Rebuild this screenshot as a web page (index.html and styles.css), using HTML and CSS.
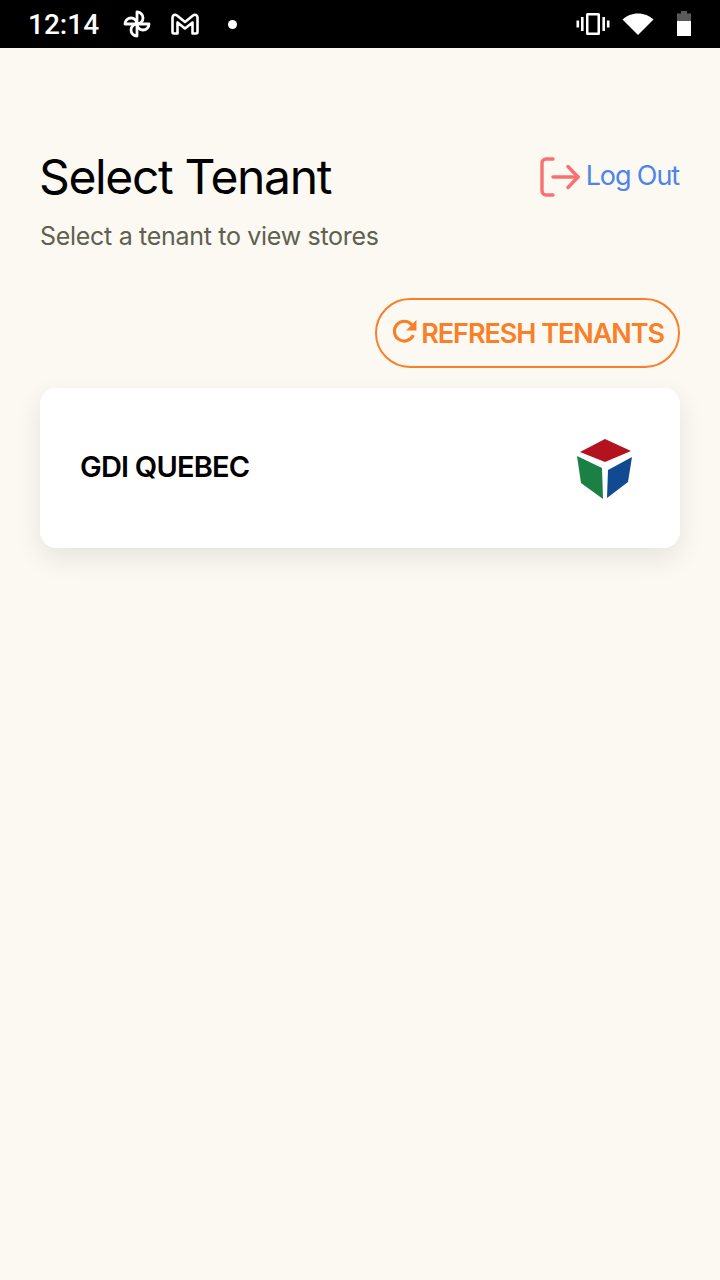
FILE: index.html
```html
<!DOCTYPE html>
<html lang="en">

<head>
    <meta charset="UTF-8">
    <meta name="viewport" content="width=device-width, initial-scale=1.0">
    <title>Select Tenant</title>
    <link rel="stylesheet" href="styles.css">
</head>

<body>
    <div class="status-bar">
        <div class="status-left">
            <span class="clock">12:14</span>
            <!-- pinwheel -->
            <svg class="fan" width="30" height="30" viewBox="0 0 30 30" fill="none" stroke="#fff" stroke-width="2.800" stroke-linejoin="round">
                <path d="M15 15V3A6 6 0 0 1 15 15Z"/>
                <path d="M15 15H27A6 6 0 0 1 15 15Z"/>
                <path d="M15 15V27A6 6 0 0 1 15 15Z"/>
                <path d="M15 15H3A6 6 0 0 1 15 15Z"/>
            </svg>
            <!-- gmail -->
            <svg class="gmail" width="30" height="24" viewBox="0 0 30 24" fill="none" stroke="#fff" stroke-width="2.600" stroke-linejoin="round">
                <path d="M2.500 5.500c0-2.500 2.500-3.500 4.500-2L15 10l8-6.500c2-1.500 4.500-.5 4.500 2V20a1.500 1.500 0 0 1-1.500 1.500h-3.500V10.500L15 16.500l-7.500-6V21.500H4A1.500 1.500 0 0 1 2.500 20Z"/>
            </svg>
            <span class="dot"></span>
        </div>
        <div class="status-right">
            <svg width="34" height="24" viewBox="0 0 34 24" fill="#fff">
                <path fill-rule="evenodd" d="M10 2.500a1.500 1.500 0 0 1 1.500-1.500h11a1.500 1.500 0 0 1 1.500 1.500v19a1.500 1.500 0 0 1-1.500 1.500h-11a1.500 1.500 0 0 1-1.500-1.500ZM12.500 3.500v17h9v-17Z"/>
                <rect x="5" y="5" width="2.600" height="14"/>
                <rect x="26.400" y="5" width="2.600" height="14"/>
                <rect x="0.500" y="8.500" width="2.600" height="7"/>
                <rect x="30.900" y="8.500" width="2.600" height="7"/>
            </svg>
            <svg class="wifi" width="32" height="24" viewBox="0 0 32 24" fill="#fff">
                <path d="M0.500 7.500C4.500 3.800 10 1.500 16 1.500s11.500 2.300 15.500 6L16 23Z"/>
            </svg>
            <svg class="battery" width="16" height="26" viewBox="0 0 16 26">
                <path fill="#5a5a5a" d="M5 0h6v2.500h4V10H1V2.500h4Z"/>
                <rect x="1" y="10" width="14" height="15" fill="#fff"/>
            </svg>
        </div>
    </div>

    <div class="page">
        <div class="top-row">
            <div>
                <h1 class="title">Select Tenant</h1>
                <p class="subtitle">Select a tenant to view stores</p>
            </div>
            <a class="logout">
                <svg width="40" height="40" viewBox="0 0 40 40" fill="none" stroke="#f87171" stroke-width="3.400" stroke-linecap="round" stroke-linejoin="round">
                    <path d="M13 2H6a4 4 0 0 0-4 4v28a4 4 0 0 0 4 4h7"/>
                    <path d="M28 9.500 38 20 28 30.500"/>
                    <path d="M13 20h25"/>
                </svg>
                <span>Log Out</span>
            </a>
        </div>

        <div class="actions">
            <button class="refresh">
                <svg class="refresh-icon" width="27" height="27" viewBox="0 0 26 26" fill="none" stroke="#f97f28" stroke-width="3">
                    <path d="M21.500 16.500A9.500 9.500 0 1 1 20 6.500l3 3"/>
                    <path fill="#f97f28" stroke="none" d="M24.500 2v10h-10Z"/>
                </svg>
                REFRESH TENANTS
            </button>
        </div>

        <div class="card">
            <span class="card-name">GDI QUEBEC</span>
            <svg class="cube" width="60" height="64" viewBox="0 0 60 64">
                <path fill="#b3121f" d="M30 2 56 14 30 25 5 15Z"/>
                <path fill="#1a8043" d="M2 19 27 31 28 62 6 46Z"/>
                <path fill="#124a92" d="M57 20 33 33 32 61 53 45Z"/>
            </svg>
        </div>
    </div>
</body>

</html>
```

FILE: styles.css
```css
* {
    box-sizing: border-box;
}

html,
body {
    margin: 0;
    padding: 0;
}

body {
    width: 720px;
    height: 1280px;
    background: #fbf9f1;
    font-family: Inter, "Liberation Sans", sans-serif;
    overflow: hidden;
}

.status-bar {
    height: 48px;
    background: #000;
    color: #fff;
    display: flex;
    justify-content: space-between;
    align-items: center;
    padding: 0 28px 0 28px;
}

.status-left,
.status-right {
    display: flex;
    align-items: center;
}

.clock {
    font-family: Roboto, sans-serif;
    font-size: 28px;
    font-weight: 500;
    width: 94px;
}

.gmail {
    margin-left: 18px;
}

.dot {
    width: 9px;
    height: 9px;
    border-radius: 50%;
    background: #fff;
    margin-left: 28px;
}

.wifi {
    margin-left: 12px;
}

.battery {
    margin-left: 22px;
}

.page {
    padding: 100px 40px 0;
}

.top-row {
    display: flex;
    justify-content: space-between;
    align-items: flex-start;
}

.title {
    margin: 0 0 0 -1px;
    font-size: 48px;
    line-height: 58px;
    font-weight: 400;
    letter-spacing: -1.35px;
    color: #000;
}

.subtitle {
    margin: 14px 0 0;
    font-size: 25px;
    line-height: 32px;
    letter-spacing: -0.3px;
    color: #5f5f52;
}

.logout {
    display: flex;
    align-items: center;
    gap: 6px;
    margin: 9px 1px 0 0;
    font-size: 27px;
    letter-spacing: -1.1px;
    color: #4f85ea;
}

.logout span {
    margin-top: -3px;
}

.actions {
    display: flex;
    justify-content: flex-end;
    margin-top: 46px;
}

.refresh {
    display: flex;
    align-items: center;
    gap: 3px;
    height: 70px;
    padding: 0 14px;
    border: 2px solid #f97f28;
    border-radius: 35px;
    background: transparent;
    color: #f97f28;
    font-family: inherit;
    font-size: 27px;
    font-weight: 600;
    letter-spacing: -1.05px;
}

.refresh-icon {
    margin-top: -4px;
}

.card {
    display: flex;
    justify-content: space-between;
    align-items: center;
    height: 160px;
    margin-top: 20px;
    padding: 0 45px 0 40px;
    background: #fff;
    border-radius: 16px;
    box-shadow: 0 10px 28px rgba(0, 0, 0, 0.09);
}

.card-name {
    margin-top: -4px;
    font-size: 29px;
    font-weight: 600;
    letter-spacing: -0.8px;
    color: #000;
}

.cube {
    margin-top: 2px;
    filter: blur(0.5px);
}
```
